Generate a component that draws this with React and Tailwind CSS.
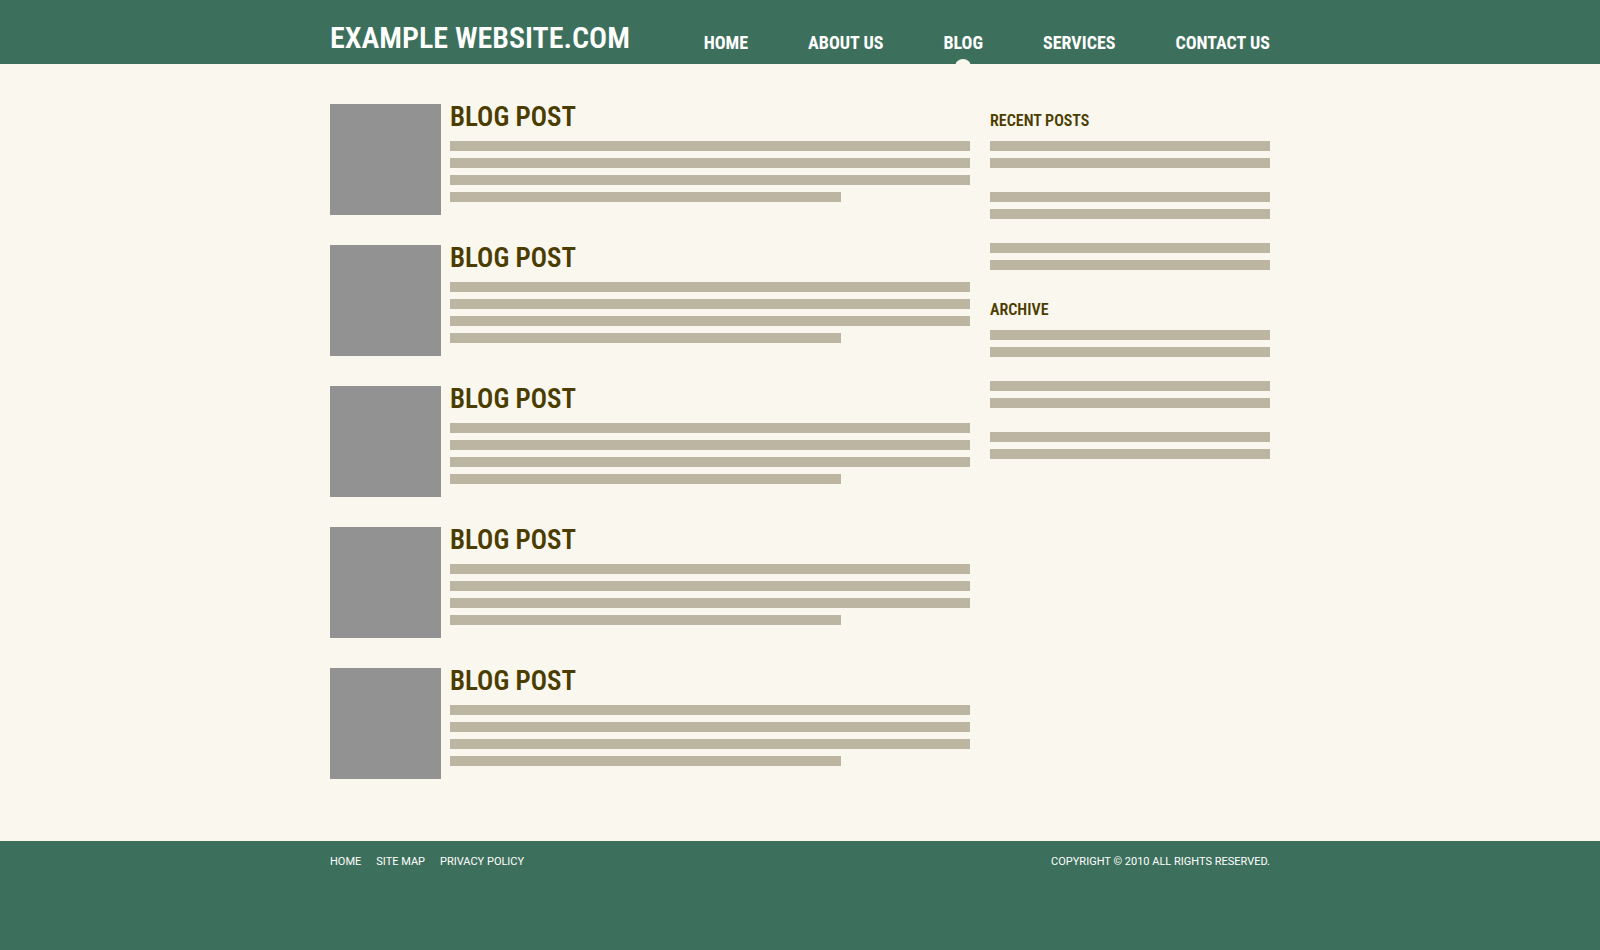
const navItems = ["HOME", "ABOUT US", "BLOG", "SERVICES", "CONTACT US"];
const footerItems = ["HOME", "SITE MAP", "PRIVACY POLICY"];
const posts = [1, 2, 3, 4, 5];
const sections = ["RECENT POSTS", "ARCHIVE"];

const condensed = "font-['Roboto_Condensed','Liberation_Sans_Narrow',sans-serif]";

function Line({ short = false }) {
  return <div className={`h-[10px] bg-[#bbb5a2] ${short ? "w-[391px]" : "w-full"}`} />;
}

function Header() {
  return (
    <header className="bg-[#3d705c] text-white">
      <div className="mx-auto flex h-16 max-w-[940px] items-end justify-between">
        <a href="#home" className={`${condensed} pb-[6px] text-[30px] leading-10 font-semibold whitespace-nowrap`}>
          EXAMPLE WEBSITE.COM
        </a>
        <nav className="flex gap-[60px]">
          {navItems.map((item) => (
            <a
              key={item}
              href="#page"
              aria-current={item === "BLOG" ? "page" : undefined}
              className={`${condensed} relative pb-[9px] text-lg leading-6 font-bold whitespace-nowrap`}
            >
              {item}
              {item === "BLOG" && (
                <span className="absolute bottom-0 left-1/2 h-[5px] w-4 -translate-x-1/2 overflow-hidden">
                  <span className="block size-4 rounded-full bg-[#faf7ee]" />
                </span>
              )}
            </a>
          ))}
        </nav>
      </div>
    </header>
  );
}

function Post() {
  return (
    <article className="flex gap-[9px]">
      <div className="size-[111px] shrink-0 bg-[#929292]" />
      <div className="flex grow flex-col gap-[7px]">
        <h2 className={`${condensed} mb-1 text-[27px] leading-[26px] font-semibold`}>BLOG POST</h2>
        <Line />
        <Line />
        <Line />
        <Line short />
      </div>
    </article>
  );
}

function SidebarSection({ title }) {
  return (
    <section>
      <h3 className={`${condensed} mb-[10px] text-base leading-5 font-semibold`}>{title}</h3>
      <div className="flex flex-col gap-6">
        {[1, 2, 3].map((n) => (
          <div key={n} className="flex flex-col gap-[7px]">
            <Line />
            <Line />
          </div>
        ))}
      </div>
    </section>
  );
}

export default function App() {
  return (
    <div className="flex min-h-screen flex-col bg-[#faf7ee] text-[#4b3c00]">
      <Header />
      <div className="mx-auto flex w-full max-w-[940px] gap-5 pt-10 pb-[62px]">
        <main className="flex grow flex-col gap-[30px]">
          {posts.map((n) => (
            <Post key={n} />
          ))}
        </main>
        <aside className="flex w-[280px] shrink-0 flex-col gap-[30px] pt-[7px]">
          {sections.map((title) => (
            <SidebarSection key={title} title={title} />
          ))}
        </aside>
      </div>
      <footer className="grow bg-[#3d705c] font-[Roboto,'Liberation_Sans',sans-serif] text-[11px] leading-4 text-white">
        <div className="mx-auto flex max-w-[940px] justify-between pt-[13px]">
          <nav className="flex gap-[15px]">
            {footerItems.map((item) => (
              <a key={item} href="#page">
                {item}
              </a>
            ))}
          </nav>
          <p>COPYRIGHT © 2010 ALL RIGHTS RESERVED.</p>
        </div>
      </footer>
    </div>
  );
}
